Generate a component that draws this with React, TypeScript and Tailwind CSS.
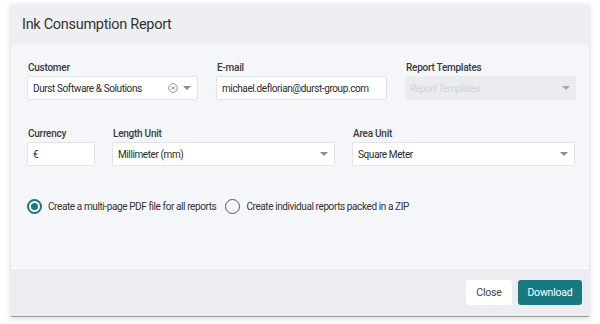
import React from "react";

const font = { fontFamily: "Roboto, 'Liberation Sans', sans-serif" };

function Caret({ light = false }: { light?: boolean }) {
  return (
    <svg width="8" height="4" viewBox="0 0 8 4" className="shrink-0">
      <path d="M0 0 L8 0 L4 4 Z" fill={light ? "#a8a9ad" : "#8a8b8f"} />
    </svg>
  );
}

function Label({ children }: { children: React.ReactNode }) {
  return (
    <div className="text-[10px] font-medium tracking-[-0.25px] text-[#3a3a3a] h-[12px] leading-[12px] mb-[2px] pl-[1px] whitespace-nowrap">
      {children}
    </div>
  );
}

function Radio({ checked, label }: { checked: boolean; label: string }) {
  return (
    <label className="flex items-center gap-[6px]">
      <span
        className={
          checked
            ? "w-[15px] h-[15px] rounded-full border-2 border-[#197a80] flex items-center justify-center"
            : "w-[15px] h-[15px] rounded-full border-[1.5px] border-[#555]"
        }
      >
        {checked && <span className="w-[7px] h-[7px] rounded-full bg-[#197a80]" />}
      </span>
      <span className="text-[10px] tracking-[-0.4px] text-[#333] whitespace-nowrap">{label}</span>
    </label>
  );
}

const txt = "text-[10px] tracking-[-0.4px] text-[#2b2b2b] whitespace-nowrap";

export default function App() {
  return (
    <div className="w-[600px] h-[324px] bg-white pt-[5px] pl-[11px]" style={font}>
      <div className="w-[578px] h-[312px] flex flex-col shadow-[0_1px_6px_rgba(0,0,0,0.18)] border-b border-[#9a9a9a] bg-[#f5f6f9]">
        {/* Header */}
        <div className="h-[40px] bg-[#eeeff2] flex items-center pl-[11px]">
          <h1 className="text-[14.5px] tracking-[-0.3px] text-[#333]">Ink Consumption Report</h1>
        </div>

        {/* Body */}
        <div className="flex-1 pl-[16px] pt-[17px]">
          <div className="w-[549px] flex gap-[18px]">
            <div className="w-[171px]">
              <Label>Customer</Label>
              <div className="h-[24px] bg-white border border-[#e3e4e7] rounded-[2px] flex items-center pl-[5px] pr-[6px]">
                <span className={txt + " flex-1"}>Durst Software &amp; Solutions</span>
                <svg width="10" height="10" viewBox="0 0 10 10" className="mr-[5px]">
                  <circle cx="5" cy="5" r="4.3" fill="none" stroke="#8a8b8f" strokeWidth="0.9" />
                  <path d="M3.4 3.4 L6.6 6.6 M6.6 3.4 L3.4 6.6" stroke="#8a8b8f" strokeWidth="0.9" />
                </svg>
                <Caret />
              </div>
            </div>
            <div className="w-[171px]">
              <Label>E-mail</Label>
              <div className="h-[24px] bg-white border border-[#e3e4e7] rounded-[2px] flex items-center pl-[5px]">
                <span className={txt}>michael.deflorian@durst-group.com</span>
              </div>
            </div>
            <div className="w-[171px]">
              <Label>Report Templates</Label>
              <div className="h-[24px] bg-[#ebecef] rounded-[2px] flex items-center pl-[5px] pr-[6px]">
                <span className="text-[10px] tracking-[-0.4px] italic text-[#d3d4d8] flex-1 whitespace-nowrap">Report Templates</span>
                <Caret light />
              </div>
            </div>
          </div>

          <div className="w-[549px] flex gap-[17px] mt-[28px]">
            <div className="w-[68px]">
              <Label>Currency</Label>
              <div className="h-[24px] bg-white border border-[#e3e4e7] rounded-[2px] flex items-center pl-[5px]">
                <span className={txt}>€</span>
              </div>
            </div>
            <div className="w-[223px]">
              <Label>Length Unit</Label>
              <div className="h-[24px] bg-white border border-[#e3e4e7] rounded-[2px] flex items-center pl-[5px] pr-[6px]">
                <span className={txt + " flex-1"}>Millimeter (mm)</span>
                <Caret />
              </div>
            </div>
            <div className="w-[223px]">
              <Label>Area Unit</Label>
              <div className="h-[24px] bg-white border border-[#e3e4e7] rounded-[2px] flex items-center pl-[5px] pr-[6px]">
                <span className={txt + " flex-1"}>Square Meter</span>
                <Caret />
              </div>
            </div>
          </div>

          <div className="flex items-center gap-[9px] mt-[33px]">
            <Radio checked label="Create a multi-page PDF file for all reports" />
            <Radio checked={false} label="Create individual reports packed in a ZIP" />
          </div>
        </div>

        {/* Footer */}
        <div className="h-[48px] bg-[#ecedf0] border-t border-white flex items-center justify-end gap-[6px] pr-[7px]">
          <button className="h-[25px] w-[46px] bg-white rounded-[3px] text-[10.5px] tracking-[-0.2px] text-[#444]">
            Close
          </button>
          <button className="h-[25px] w-[64px] bg-[#187a80] rounded-[3px] text-[10.5px] tracking-[-0.2px] text-white">
            Download
          </button>
        </div>
      </div>
    </div>
  );
}
